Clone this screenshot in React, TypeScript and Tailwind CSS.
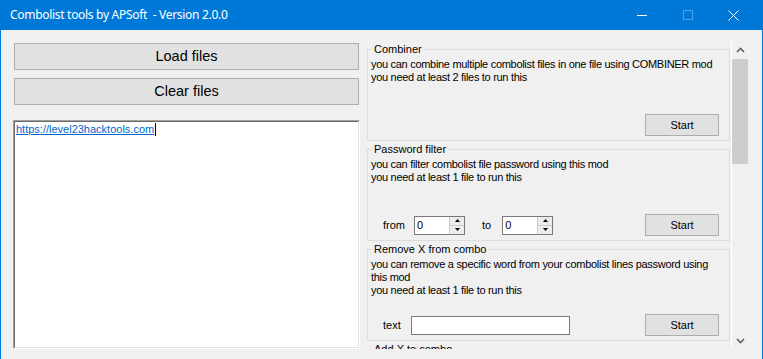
import type { ReactNode } from 'react';

const font = { fontFamily: '"Liberation Sans", Arial, sans-serif' };

function WinButton({ children, className }: { children: ReactNode; className: string }) {
    return (
        <button
            className={`flex items-center justify-center border border-[#adadad] bg-[#e1e1e1] text-black ${className}`}
        >
            {children}
        </button>
    );
}

function Chevron({ down }: { down?: boolean }) {
    return (
        <svg width="9" height="6" viewBox="0 0 9 6">
            <path
                d={down ? 'M1 1 L4.5 4.5 L8 1' : 'M1 5 L4.5 1.5 L8 5'}
                fill="none"
                stroke="#606060"
                strokeWidth="1.6"
            />
        </svg>
    );
}

function NumericBox() {
    return (
        <div className="flex h-[19px] w-[51px] border border-[#7a7a7a] bg-white">
            <span className="flex-1 pl-[2px] text-[11px] leading-[17px]">0</span>
            <div className="flex w-[15px] flex-col border-l border-[#cccccc]">
                <div className="flex flex-1 items-center justify-center border-b border-[#cccccc] bg-[#ececec]">
                    <svg width="5" height="3" viewBox="0 0 5 3">
                        <path d="M0 3 L2.5 0 L5 3 Z" fill="#000" />
                    </svg>
                </div>
                <div className="flex flex-1 items-center justify-center bg-[#ececec]">
                    <svg width="5" height="3" viewBox="0 0 5 3">
                        <path d="M0 0 L2.5 3 L5 0 Z" fill="#000" />
                    </svg>
                </div>
            </div>
        </div>
    );
}

function Group({
    title,
    lines,
    children,
    noButton,
}: {
    title: string;
    lines: string[];
    children?: ReactNode;
    noButton?: boolean;
}) {
    return (
        <div className="mb-[1px] flex h-[99px] w-[363px] shrink-0 flex-col">
            {/* title row with the frame's top edge */}
            <div className="flex h-[14px] shrink-0 items-center">
                <div className="h-[7px] w-[5px] self-end border-l border-t border-[#dcdcdc]" />
                <span className="px-[2px] text-[11px] leading-[14px]">{title}</span>
                <div className="h-[7px] flex-1 self-end border-r border-t border-[#dcdcdc]" />
            </div>
            <div className="flex min-h-0 flex-1 flex-col border-x border-b border-[#dcdcdc] pt-[2px] pb-[4px] pl-[3px]">
                <div className="pr-[8px] text-[11px] leading-[13px] tracking-[-0.3px]">
                    {lines.map((l, i) => (
                        <div key={i}>{l}</div>
                    ))}
                </div>
                {!noButton && (
                    <div className="mt-auto flex items-center pr-[10px]">
                        {children}
                        <WinButton className="ml-auto h-[22px] w-[74px] text-[11px]">Start</WinButton>
                    </div>
                )}
            </div>
        </div>
    );
}

export default function App() {
    return (
        <div className="flex h-[359px] w-[763px] flex-col overflow-hidden bg-[#0078d7]" style={font}>
            {/* Title bar */}
            <div className="flex h-[30px] shrink-0 items-center text-white">
                <span
                    className="whitespace-pre pl-[10px] text-[12px] tracking-[-0.3px]"
                    style={{ fontFamily: '"Noto Sans", "Open Sans", sans-serif' }}
                >
                    Combolist tools by APSoft  - Version 2.0.0
                </span>
                <div className="ml-auto flex items-center">
                    <div className="flex w-[46px] items-center justify-center">
                        <div className="h-[1px] w-[10px] bg-white" />
                    </div>
                    <div className="flex w-[46px] items-center justify-center">
                        <div className="h-[10px] w-[10px] border border-[#4ca1e6]" />
                    </div>
                    <div className="flex w-[46px] items-center justify-center pr-[1px]">
                        <svg width="11" height="11" viewBox="0 0 11 11">
                            <path d="M0.5 0.5 L10.5 10.5 M10.5 0.5 L0.5 10.5" stroke="#fff" strokeWidth="1" />
                        </svg>
                    </div>
                    <div className="w-[6px]" />
                </div>
            </div>

            {/* Client area */}
            <div className="mx-[1px] flex flex-1 bg-[#f0f0f0]">
                {/* Left column */}
                <div className="flex w-[359px] flex-col pl-[12px] pt-[13px]">
                    <WinButton className="ml-[1px] h-[27px] w-[345px] text-[14.5px]">Load files</WinButton>
                    <WinButton className="ml-[1px] mt-[8px] h-[27px] w-[345px] text-[14.5px]">Clear files</WinButton>
                    <div className="mt-[15px] h-[229px] w-[347px] border border-t-[#a0a0a0] border-l-[#a0a0a0] border-r-white border-b-white">
                        <div className="h-full w-full border border-t-[#696969] border-l-[#696969] border-r-[#e3e3e3] border-b-[#e3e3e3] bg-white pl-[1px] pt-[1px] text-[11px] leading-[13px]">
                            <span className="text-[#0066cc] underline">https://level23hacktools.com</span>
                            <span className="ml-[1px] inline-block h-[13px] w-[1px] bg-black align-[-3px]" />
                        </div>
                    </div>
                </div>

                {/* Right scroll panel */}
                <div className="ml-[6px] mt-[11px] flex h-[308px] w-[383px] overflow-hidden">
                    <div className="flex w-[365px] flex-col overflow-hidden pl-[1px] pt-[1px]">
                        <Group
                            title="Combiner"
                            lines={[
                                'you can combine multiple combolist files in one file using COMBINER mod',
                                'you need at least 2 files to run this',
                            ]}
                        />
                        <Group
                            title="Password filter"
                            lines={['you can filter combolist file password using this mod', 'you need at least 1 file to run this']}
                        >
                            <span className="pl-[12px] text-[11px]">from</span>
                            <div className="ml-[9px]">
                                <NumericBox />
                            </div>
                            <span className="ml-[17px] text-[11px]">to</span>
                            <div className="ml-[11px]">
                                <NumericBox />
                            </div>
                        </Group>
                        <Group
                            title="Remove X from combo"
                            lines={[
                                'you can remove a specific word from your combolist lines password using this mod',
                                'you need at least 1 file to run this',
                            ]}
                        >
                            <span className="pl-[12px] text-[11px]">text</span>
                            <input className="ml-[10px] h-[19px] w-[159px] border border-[#7a7a7a] bg-white text-[11px] outline-none" />
                        </Group>
                        <Group title="Add X to combo" lines={[]} noButton />
                    </div>
                    <div className="w-[1px] bg-white" />
                    {/* Scrollbar */}
                    <div className="flex w-[17px] flex-col bg-[#f0f0f0]">
                        <div className="flex h-[17px] items-center justify-center">
                            <Chevron />
                        </div>
                        <div className="mt-[1px] h-[105px] w-[16px] bg-[#cdcdcd]" />
                        <div className="mt-auto flex h-[17px] items-center justify-center">
                            <Chevron down />
                        </div>
                    </div>
                </div>
            </div>
        </div>
    );
}
